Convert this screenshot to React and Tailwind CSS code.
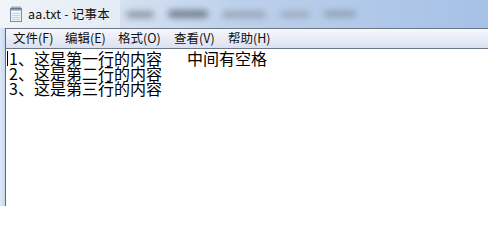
import React from 'react'

const menus = [
  { label: '文件(F)', w: 'w-[52px]' },
  { label: '编辑(E)', w: 'w-[53px]' },
  { label: '格式(O)', w: 'w-[56px]' },
  { label: '查看(V)', w: 'w-[54px]' },
  { label: '帮助(H)', w: 'w-[56px]' },
]

function NotepadIcon() {
  return (
    <svg width="14" height="16" viewBox="0 0 14 16" className="shrink-0">
      <rect x="1.5" y="2.5" width="11" height="13" fill="#eef3f8" stroke="#7d8ea3" />
      <rect x="2" y="3" width="10" height="2" fill="#b9cbe0" />
      {[3, 5, 7, 9, 11].map((x) => (
        <line key={x} x1={x} y1="0.5" x2={x} y2="4" stroke="#5a6878" strokeWidth="1" />
      ))}
      {[7.5, 9.5, 11.5, 13.5].map((y) => (
        <line key={y} x1="3" y1={y} x2="11" y2={y} stroke="#c8d4e2" strokeWidth="1" />
      ))}
    </svg>
  )
}

export default function App() {
  return (
    <div className="w-[488px] h-[206px] overflow-hidden flex flex-col bg-[#cfdff2] font-['Noto_Sans_CJK_SC',sans-serif]">
      {/* ── Title bar (aero glass) ── */}
      <div className="h-[28px] shrink-0 flex items-center overflow-hidden bg-gradient-to-r from-[#eef2f7] via-[#bcd0eb] to-[#a6c1e6]">
        <div className="flex items-center gap-[5px] pl-[9px] pr-[10px] h-full bg-gradient-to-r from-[#f1f4f8] to-[#e3ebf5]">
          <NotepadIcon />
          <span className="text-[12.5px] leading-none text-[#111] tracking-[0.2px]">aa.txt - 记事本</span>
        </div>
        <div className="flex items-center h-full gap-[14px] pl-[6px]">
          <span className="w-[28px] h-[7px] rounded-full bg-[#7d8796] blur-[3px] opacity-80" />
          <span className="w-[40px] h-[8px] rounded-full bg-[#6f7a8a] blur-[3px] opacity-90" />
          <span className="w-[44px] h-[7px] rounded-full bg-[#8a96a6] blur-[3px] opacity-70" />
          <span className="w-[30px] h-[7px] rounded-full bg-[#8c98a8] blur-[3px] opacity-60" />
          <span className="w-[32px] h-[6px] rounded-full bg-[#7f8a99] blur-[3px] opacity-70" />
        </div>
      </div>

      {/* ── Body: left frame + client area ── */}
      <div className="flex flex-1 min-h-0">
        <div className="w-[5px] shrink-0 bg-gradient-to-r from-[#dfe9f6] to-[#c7d8ee]" />
        <div className="flex-1 flex flex-col border-l border-[#5f6b7a] min-w-0">
          {/* menu bar */}
          <div className="h-[21px] shrink-0 flex items-center pl-[7px] border-t border-b border-[#6c7888] bg-gradient-to-b from-[#f7f8fc] to-[#dbe1f1]">
            {menus.map((m) => (
              <span key={m.label} className={`${m.w} text-[12.5px] leading-none text-[#111]`}>
                {m.label}
              </span>
            ))}
          </div>

          {/* text area */}
          <div className="flex-1 bg-white pt-[2px] pl-[1px] text-[16px] leading-[15px] text-black">
            <div className="flex items-center whitespace-pre h-[15px]">
              <span className="w-px h-[15px] bg-black mr-px" />
              <span>1、这是第一行的内容</span>
              <span className="ml-[25px]">中间有空格</span>
            </div>
            <div className="pl-[2px] h-[15px]">2、这是第二行的内容</div>
            <div className="pl-[2px] h-[15px]">3、这是第三行的内容</div>
          </div>
        </div>
      </div>
    </div>
  )
}
